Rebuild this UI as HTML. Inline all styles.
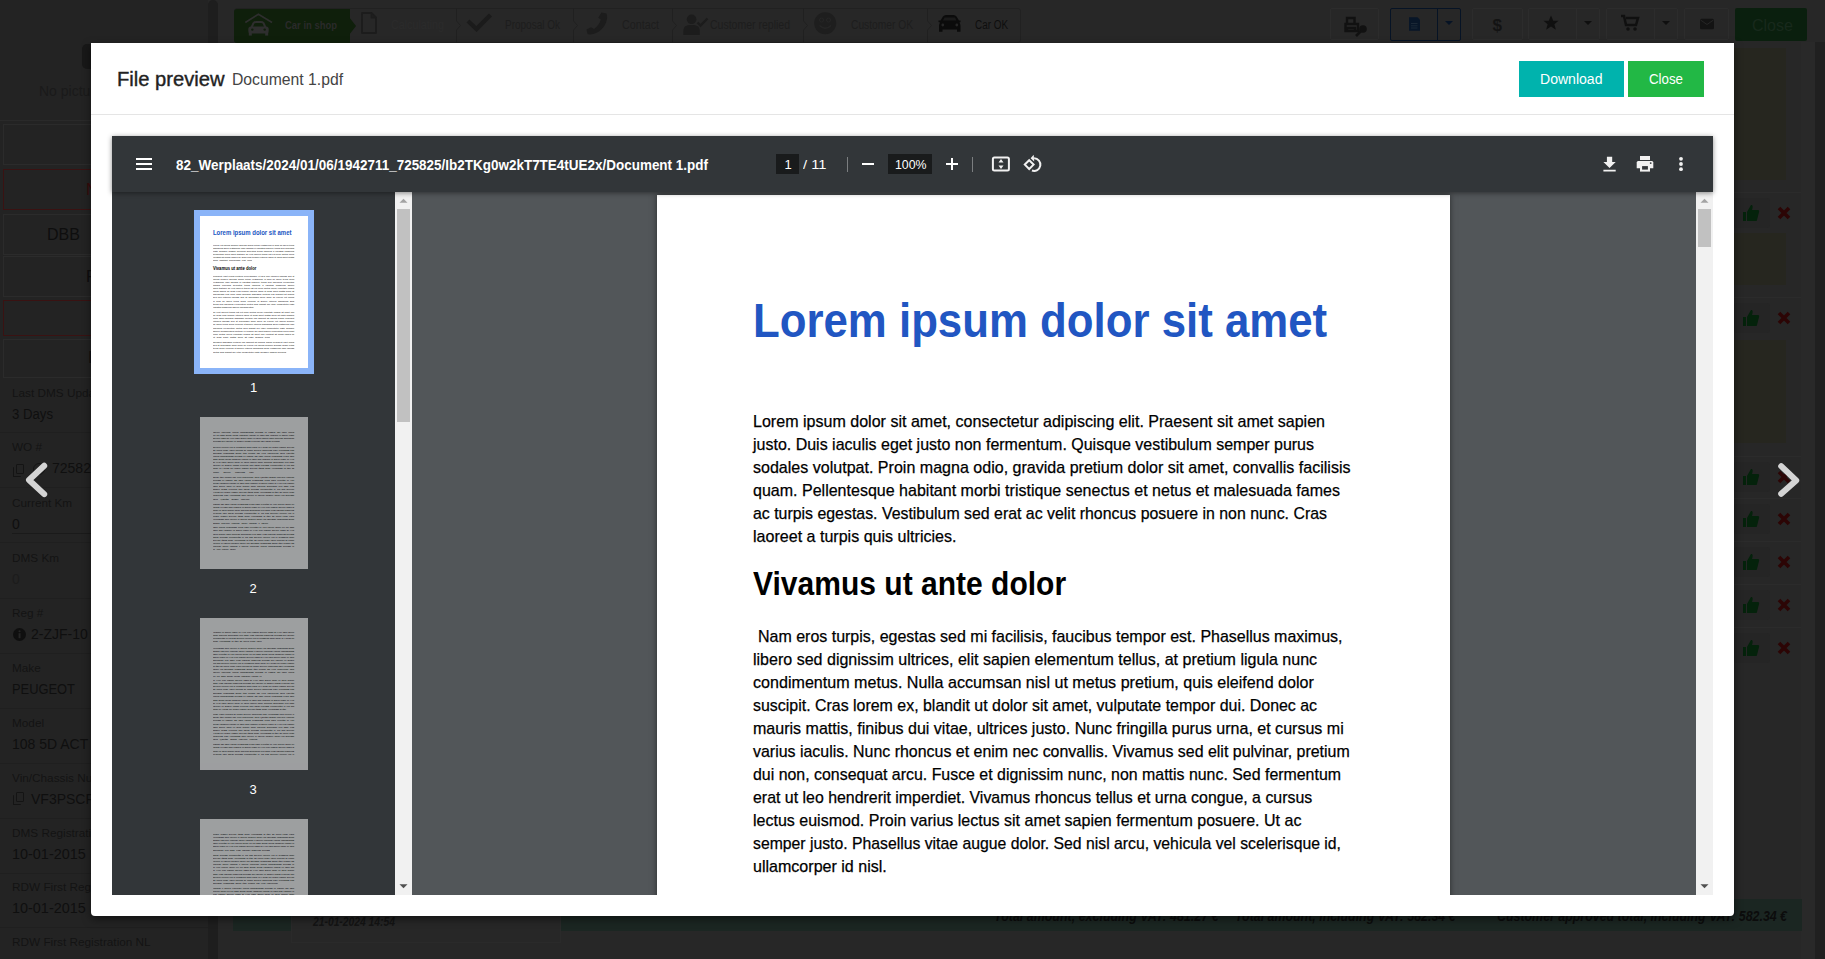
<!DOCTYPE html>
<html><head><meta charset="utf-8"><style>
*{box-sizing:border-box;margin:0;padding:0}
html,body{width:1825px;height:959px;overflow:hidden;background:#272727;font-family:"Liberation Sans",sans-serif;position:relative}
.a{position:absolute}
.t{position:absolute;white-space:pre;transform-origin:0 0;line-height:normal;font-family:"Liberation Sans",sans-serif}
svg{position:absolute;overflow:visible}
</style></head><body>
<div class="a" style="left:0;top:0;width:208px;height:959px;background:#232323"></div>
<div class="a" style="left:208px;top:0;width:10px;height:959px;background:#1e1e1e;border-radius:5px 5px 0 0"></div>
<div class="a" style="left:82px;top:44px;width:20px;height:25px;background:#181818;border-radius:5px"></div>
<div class="t" style="left:39px;top:83px;font-size:14px;font-weight:normal;font-style:normal;color:#1a1a1a;">No pictures</div>
<div class="a" style="left:0;top:120px;width:208px;height:1px;background:#2a2a2a"></div>
<div class="a" style="left:3px;top:124px;width:200px;height:41px;border:1px solid #2b2b2b"></div>
<div class="a" style="left:3px;top:169px;width:200px;height:41px;border:1px solid #3a1212"></div>
<div class="a" style="left:3px;top:214px;width:200px;height:41px;border:1px solid #2b2b2b"></div>
<div class="a" style="left:3px;top:256px;width:200px;height:41px;border:1px solid #2b2b2b"></div>
<div class="a" style="left:3px;top:300px;width:200px;height:36px;border:1px solid #3a1212"></div>
<div class="a" style="left:3px;top:339px;width:200px;height:39px;border:1px solid #2b2b2b"></div>
<div class="t" style="left:86px;top:181px;font-size:16px;font-weight:normal;font-style:normal;color:#3a0b0b;">NAP</div>
<div class="t" style="left:47px;top:226px;font-size:16px;font-weight:normal;font-style:normal;color:#0e0e0e;">DBB</div>
<div class="t" style="left:86px;top:268px;font-size:16px;font-weight:normal;font-style:normal;color:#0e0e0e;">FO</div>
<div class="t" style="left:88px;top:349px;font-size:16px;font-weight:normal;font-style:normal;color:#0e0e0e;">I</div>
<div class="t" style="left:12px;top:386.7px;font-size:11px;font-weight:normal;font-style:normal;color:#131313;transform:scaleX(1.0700);">Last DMS Update</div>
<div class="t" style="left:12px;top:405.6px;font-size:14px;font-weight:normal;font-style:normal;color:#0f0f0f;transform:scaleX(0.9400);">3 Days</div>
<div class="a" style="left:0;top:432px;width:208px;height:1px;background:#1f1f1f"></div>
<div class="t" style="left:12px;top:441.4px;font-size:11px;font-weight:normal;font-style:normal;color:#131313;transform:scaleX(1.0700);">WO #</div>
<div class="t" style="left:52px;top:460.3px;font-size:14px;font-weight:normal;font-style:normal;color:#0f0f0f;">725825</div>
<div class="a" style="left:0;top:487px;width:208px;height:1px;background:#1f1f1f"></div>
<div class="t" style="left:12px;top:496.5px;font-size:11px;font-weight:normal;font-style:normal;color:#131313;transform:scaleX(1.0700);">Current Km</div>
<div class="t" style="left:12px;top:515.5px;font-size:14px;font-weight:normal;font-style:normal;color:#0f0f0f;">0</div>
<div class="a" style="left:0;top:542px;width:208px;height:1px;background:#1f1f1f"></div>
<div class="t" style="left:12px;top:552px;font-size:11px;font-weight:normal;font-style:normal;color:#131313;transform:scaleX(1.0700);">DMS Km</div>
<div class="t" style="left:12px;top:571px;font-size:14px;font-weight:normal;font-style:normal;color:#1c1c1c;">0</div>
<div class="a" style="left:0;top:598px;width:208px;height:1px;background:#1f1f1f"></div>
<div class="t" style="left:12px;top:607px;font-size:11px;font-weight:normal;font-style:normal;color:#131313;transform:scaleX(1.0700);">Reg #</div>
<div class="t" style="left:31px;top:626px;font-size:14px;font-weight:normal;font-style:normal;color:#0f0f0f;">2-ZJF-10</div>
<div class="a" style="left:0;top:653px;width:208px;height:1px;background:#1f1f1f"></div>
<div class="t" style="left:12px;top:662px;font-size:11px;font-weight:normal;font-style:normal;color:#131313;transform:scaleX(1.0700);">Make</div>
<div class="t" style="left:12px;top:681px;font-size:14px;font-weight:normal;font-style:normal;color:#0f0f0f;transform:scaleX(0.9200);">PEUGEOT</div>
<div class="a" style="left:0;top:708px;width:208px;height:1px;background:#1f1f1f"></div>
<div class="t" style="left:12px;top:717px;font-size:11px;font-weight:normal;font-style:normal;color:#131313;transform:scaleX(1.0700);">Model</div>
<div class="t" style="left:12px;top:736px;font-size:14px;font-weight:normal;font-style:normal;color:#0f0f0f;">108 5D ACT</div>
<div class="a" style="left:0;top:763px;width:208px;height:1px;background:#1f1f1f"></div>
<div class="t" style="left:12px;top:772px;font-size:11px;font-weight:normal;font-style:normal;color:#131313;transform:scaleX(1.0700);">Vin/Chassis Number</div>
<div class="t" style="left:31px;top:791px;font-size:14px;font-weight:normal;font-style:normal;color:#0f0f0f;">VF3PSCF</div>
<div class="a" style="left:0;top:818px;width:208px;height:1px;background:#1f1f1f"></div>
<div class="t" style="left:12px;top:827px;font-size:11px;font-weight:normal;font-style:normal;color:#131313;transform:scaleX(1.0700);">DMS Registration</div>
<div class="t" style="left:12px;top:846px;font-size:14px;font-weight:normal;font-style:normal;color:#0f0f0f;transform:scaleX(1.0300);">10-01-2015</div>
<div class="a" style="left:0;top:873px;width:208px;height:1px;background:#1f1f1f"></div>
<div class="t" style="left:12px;top:881px;font-size:11px;font-weight:normal;font-style:normal;color:#131313;transform:scaleX(1.0700);">RDW First Registration</div>
<div class="t" style="left:12px;top:900px;font-size:14px;font-weight:normal;font-style:normal;color:#0f0f0f;transform:scaleX(1.0300);">10-01-2015</div>
<div class="a" style="left:0;top:927px;width:208px;height:1px;background:#1f1f1f"></div>
<div class="t" style="left:12px;top:936px;font-size:11px;font-weight:normal;font-style:normal;color:#131313;transform:scaleX(1.0700);">RDW First Registration NL</div>
<div class="a" style="left:0;top:982px;width:208px;height:1px;background:#1f1f1f"></div>
<div class="a" style="left:16px;top:464px;width:8px;height:10px;border:1.5px solid #141414;border-radius:1px"></div>
<div class="a" style="left:13px;top:467px;width:8px;height:10px;border:1.5px solid #141414;border-radius:1px;border-right:none;border-top:none"></div>
<div class="a" style="left:16px;top:792px;width:8px;height:10px;border:1.5px solid #141414;border-radius:1px"></div>
<div class="a" style="left:13px;top:795px;width:8px;height:10px;border:1.5px solid #141414;border-radius:1px;border-right:none;border-top:none"></div>
<div class="a" style="left:33px;top:463px;width:12px;height:12px;border:1.5px solid #141414;border-radius:50%"></div>
<svg style="left:12px;top:627px" width="15" height="15" viewBox="0 0 15 15"><circle cx="7.5" cy="7.5" r="6.5" fill="#0f0f0f"/><rect x="6.6" y="6.2" width="1.9" height="5" fill="#262626"/><circle cx="7.55" cy="4.2" r="1.05" fill="#262626"/></svg>
<div class="a" style="left:12px;top:533px;width:196px;height:1px;background:#1a1a1a"></div>
<div class="a" style="left:234px;top:8px;width:787px;height:35px;border:1px solid #212121;border-radius:3px"></div>
<div class="a" style="left:234px;top:9px;width:116px;height:34px;background:#0f1f0b;border-radius:3px 0 0 3px"></div>
<svg style="left:349px;top:17px" width="8" height="18" viewBox="0 0 8 18"><path d="M0 0 L7 9 L0 18Z" fill="#0f1f0b"/></svg>
<svg style="left:240px;top:10px" width="36" height="30" viewBox="240 10 36 30"><path d="M245.3 22.5 L258.4 14.2 L272.1 22.5" fill="none" stroke="#2e2e2e" stroke-width="1.6"/><path d="M251.5 27.5 L253.5 23 Q254.3 22 256 22 H261 Q262.7 22 263.5 23 L265.5 27.5" fill="none" stroke="#2e2e2e" stroke-width="2"/><rect x="248.3" y="26.5" width="20.4" height="7" rx="2.5" fill="#2e2e2e"/><circle cx="252.3" cy="29.6" r="1.2" fill="#0f1f0b"/><circle cx="264.7" cy="29.6" r="1.2" fill="#0f1f0b"/><rect x="248.8" y="32" width="3" height="3.6" fill="#2e2e2e"/><rect x="265.2" y="32" width="3" height="3.6" fill="#2e2e2e"/></svg>
<div class="t" style="left:284.5px;top:19.3px;font-size:11px;font-weight:bold;font-style:normal;color:#2a2a2a;transform:scaleX(0.8593);">Car in shop</div>
<div class="t" style="left:391px;top:18px;font-size:12px;font-weight:normal;font-style:normal;color:#2b2b2b;transform:scaleX(0.8926);">Calculating</div>
<div class="t" style="left:505px;top:18px;font-size:12px;font-weight:normal;font-style:normal;color:#1d1d1d;transform:scaleX(0.8329);">Proposal Ok</div>
<div class="t" style="left:622px;top:18px;font-size:12px;font-weight:normal;font-style:normal;color:#1d1d1d;transform:scaleX(0.8946);">Contact</div>
<div class="t" style="left:710px;top:18px;font-size:12px;font-weight:normal;font-style:normal;color:#1d1d1d;transform:scaleX(0.8755);">Customer replied</div>
<div class="t" style="left:851px;top:18px;font-size:12px;font-weight:normal;font-style:normal;color:#1d1d1d;transform:scaleX(0.8530);">Customer OK</div>
<div class="t" style="left:975px;top:18px;font-size:12px;font-weight:normal;font-style:normal;color:#0e0e0e;transform:scaleX(0.8247);">Car OK</div>
<svg style="left:455.6px;top:8px" width="10" height="35" viewBox="0 0 10 35"><path d="M0.5 0 V13 L4.5 17.5 L0.5 22 V35" fill="none" stroke="#202020" stroke-width="1"/></svg>
<svg style="left:573.2px;top:8px" width="10" height="35" viewBox="0 0 10 35"><path d="M0.5 0 V13 L4.5 17.5 L0.5 22 V35" fill="none" stroke="#202020" stroke-width="1"/></svg>
<svg style="left:671.9px;top:8px" width="10" height="35" viewBox="0 0 10 35"><path d="M0.5 0 V13 L4.5 17.5 L0.5 22 V35" fill="none" stroke="#202020" stroke-width="1"/></svg>
<svg style="left:802.6px;top:8px" width="10" height="35" viewBox="0 0 10 35"><path d="M0.5 0 V13 L4.5 17.5 L0.5 22 V35" fill="none" stroke="#202020" stroke-width="1"/></svg>
<svg style="left:926.6px;top:8px" width="10" height="35" viewBox="0 0 10 35"><path d="M0.5 0 V13 L4.5 17.5 L0.5 22 V35" fill="none" stroke="#202020" stroke-width="1"/></svg>
<svg style="left:358px;top:10px" width="22" height="28" viewBox="358 10 22 28"><path d="M362 13 H371.5 L376 17.5 V33 H362 Z M371.5 13 V17.5 H376" fill="none" stroke="#1c1c1c" stroke-width="1.8" stroke-linejoin="round"/></svg>
<svg style="left:460px;top:10px" width="36" height="26" viewBox="460 10 36 26"><path d="M469.5 22.5 L476.5 29 L489 16.5" fill="none" stroke="#1b1b1b" stroke-width="4.2" stroke-linecap="square"/></svg>
<svg style="left:580px;top:8px" width="32" height="30" viewBox="580 8 32 30"><path d="M601.5 12.6 L606.5 13.6 C608.5 19 605.5 27 599 31.5 C594 34.5 590 35 587.5 34 L586.5 29.5 L591 27.2 L594 29 C597.5 26.8 599.8 23 600.8 19.5 L598.2 17.8 Z" fill="#1c1c1c"/></svg>
<svg style="left:680px;top:10px" width="32" height="28" viewBox="680 10 32 28"><circle cx="691.6" cy="19.3" r="4.8" fill="#1c1c1c"/><path d="M683.4 35 V31 C683.4 26.5 686 25 691.6 25 C697 25 699.8 26.5 699.8 31 V35 Z" fill="#1c1c1c"/><path d="M697.5 22.5 L700.5 25.5 L707.5 18.5" fill="none" stroke="#1c1c1c" stroke-width="2.4"/></svg>
<svg style="left:812px;top:10px" width="28" height="28" viewBox="812 10 28 28"><circle cx="825.2" cy="23.3" r="11" fill="#1e1e1e"/><circle cx="821.5" cy="20" r="2" fill="none" stroke="#262626" stroke-width="1"/><circle cx="828.5" cy="20" r="2" fill="none" stroke="#262626" stroke-width="1"/><path d="M819.5 25.5 Q825.2 31 831 25.5" fill="none" stroke="#262626" stroke-width="1.4"/></svg>
<svg style="left:935px;top:12px" width="30" height="24" viewBox="935 12 30 24"><path d="M940.5 20.5 L943 16.5 Q944 15 946 15 H953.5 Q955.5 15 956.5 16.5 L959 20.5 H960.5 V22 L959.5 22.5 Q960.5 24 960.5 26 V31.8 H957 V29.5 H942.5 V31.8 H939 V26 Q939 24 940 22.5 L938.5 22 V20.5 Z" fill="#0b0b0b"/><path d="M943 20.5 L944.5 17.5 H955 L956.5 20.5Z" fill="#1a1a1a"/><circle cx="942.8" cy="25" r="1.4" fill="#262626"/><circle cx="956.8" cy="25" r="1.4" fill="#262626"/></svg>
<div class="a" style="left:1330px;top:8px;width:49px;height:32px;border:1px solid #2c2c2c;border-radius:2px"></div>
<div class="a" style="left:1472px;top:8px;width:51px;height:32px;border:1px solid #2c2c2c;border-radius:2px"></div>
<div class="a" style="left:1684px;top:8px;width:45px;height:32px;border:1px solid #2c2c2c;border-radius:2px"></div>
<div class="a" style="left:1528px;top:8px;width:72px;height:32px;border:1px solid #2c2c2c;border-radius:2px"></div>
<div class="a" style="left:1576px;top:8px;width:1px;height:32px;background:#2c2c2c"></div>
<svg style="left:1583px;top:20px" width="10" height="6" viewBox="0 0 10 6"><path d="M1 1h8l-4 4z" fill="#0f0f0f"/></svg>
<div class="a" style="left:1606px;top:8px;width:72px;height:32px;border:1px solid #2c2c2c;border-radius:2px"></div>
<div class="a" style="left:1654px;top:8px;width:1px;height:32px;background:#2c2c2c"></div>
<svg style="left:1661px;top:20px" width="10" height="6" viewBox="0 0 10 6"><path d="M1 1h8l-4 4z" fill="#0f0f0f"/></svg>
<div class="a" style="left:1390px;top:8px;width:71px;height:33px;border:1.5px solid #061325;border-radius:2px"></div>
<div class="a" style="left:1436.5px;top:8px;width:1.5px;height:33px;background:#061325"></div>
<svg style="left:1444px;top:20px" width="10" height="6" viewBox="0 0 10 6"><path d="M1 1h8l-4 4z" fill="#061325"/></svg>
<svg style="left:1405px;top:15px" width="16" height="18" viewBox="1405 15 16 18"><path d="M1409 17.2 H1417.5 L1420 19.7 V30.8 H1409 Z" fill="#081628"/><path d="M1411 23.5h6.5M1411 25.8h6.5M1411 28h6.5" stroke="#1e2a38" stroke-width="0.9"/></svg>
<svg style="left:1340px;top:12px" width="32" height="28" viewBox="1340 12 32 28"><path d="M1347 24 V18 H1354.5 V24 M1345.5 24 H1358 V31 H1345.5 Z M1347 31 V28 H1355 V31" fill="none" stroke="#111" stroke-width="2.4"/><circle cx="1363" cy="29" r="3.8" fill="#111"/><path d="M1361 31 L1356 36" stroke="#111" stroke-width="2.6"/></svg>
<div class="t" style="left:1492.5px;top:16px;font-size:17px;font-weight:bold;font-style:normal;color:#131313;">$</div>
<svg style="left:1542px;top:14px" width="18" height="18" viewBox="0 0 24 24"><path d="M12 2l3 7h7l-5.5 4.5 2 7.5L12 16.5 5.5 21l2-7.5L2 9h7z" fill="#101010"/></svg>
<svg style="left:1620px;top:14px" width="20" height="18" viewBox="0 0 20 18"><path d="M1 2h3l2 9h10l2-7H6" fill="none" stroke="#101010" stroke-width="2.5"/><circle cx="8" cy="15" r="1.8" fill="#101010"/><circle cx="15" cy="15" r="1.8" fill="#101010"/></svg>
<svg style="left:1698px;top:16px" width="18" height="16" viewBox="1698 16 18 16"><rect x="1700" y="18.7" width="14" height="10.5" rx="1.5" fill="#131313"/><path d="M1700.5 20 L1707 24.5 L1713.5 20" fill="none" stroke="#262626" stroke-width="1"/></svg>
<div class="a" style="left:1735px;top:8px;width:72px;height:33px;background:#0a1f0e;border-radius:2px"></div>
<div class="t" style="left:1752px;top:17px;font-size:16px;font-weight:normal;font-style:normal;color:#18291c;">Close</div>
<div class="a" style="left:1801px;top:42px;width:14px;height:917px;background:#292929"></div>
<div class="a" style="left:1815px;top:42px;width:10px;height:917px;background:#202020"></div>
<div class="a" style="left:1734px;top:48px;width:52px;height:132px;background:#26261f"></div>
<div class="a" style="left:1734px;top:233px;width:52px;height:52px;background:#26261f"></div>
<div class="a" style="left:1734px;top:340px;width:52px;height:103px;background:#26261f"></div>
<div class="a" style="left:1734px;top:198px;width:36px;height:30px;background:#252525;border-radius:3px"></div>
<svg style="left:1742px;top:204px" width="18" height="18" viewBox="0 0 18 18"><path d="M1 8h3v9H1z M5 8 L9 1 C11 1 11 3 10 6 H16 C17 6 17.5 7 17 8 L15 16 C15 17 14 17 13 17 H5z" fill="#04220b"/></svg>
<svg style="left:1777px;top:206px" width="14" height="14" viewBox="0 0 14 14"><path d="M2 2 L12 12 M12 2 L2 12" stroke="#2c0505" stroke-width="3.6"/></svg>
<div class="a" style="left:1734px;top:192px;width:67px;height:1px;background:#2b2b2b"></div>
<div class="a" style="left:1734px;top:303px;width:36px;height:30px;background:#252525;border-radius:3px"></div>
<svg style="left:1742px;top:309px" width="18" height="18" viewBox="0 0 18 18"><path d="M1 8h3v9H1z M5 8 L9 1 C11 1 11 3 10 6 H16 C17 6 17.5 7 17 8 L15 16 C15 17 14 17 13 17 H5z" fill="#04220b"/></svg>
<svg style="left:1777px;top:311px" width="14" height="14" viewBox="0 0 14 14"><path d="M2 2 L12 12 M12 2 L2 12" stroke="#2c0505" stroke-width="3.6"/></svg>
<div class="a" style="left:1734px;top:297px;width:67px;height:1px;background:#2b2b2b"></div>
<div class="a" style="left:1734px;top:462px;width:36px;height:30px;background:#252525;border-radius:3px"></div>
<svg style="left:1742px;top:468px" width="18" height="18" viewBox="0 0 18 18"><path d="M1 8h3v9H1z M5 8 L9 1 C11 1 11 3 10 6 H16 C17 6 17.5 7 17 8 L15 16 C15 17 14 17 13 17 H5z" fill="#04220b"/></svg>
<svg style="left:1777px;top:470px" width="14" height="14" viewBox="0 0 14 14"><path d="M2 2 L12 12 M12 2 L2 12" stroke="#2c0505" stroke-width="3.6"/></svg>
<div class="a" style="left:1734px;top:456px;width:67px;height:1px;background:#2b2b2b"></div>
<div class="a" style="left:1734px;top:504px;width:36px;height:30px;background:#252525;border-radius:3px"></div>
<svg style="left:1742px;top:510px" width="18" height="18" viewBox="0 0 18 18"><path d="M1 8h3v9H1z M5 8 L9 1 C11 1 11 3 10 6 H16 C17 6 17.5 7 17 8 L15 16 C15 17 14 17 13 17 H5z" fill="#04220b"/></svg>
<svg style="left:1777px;top:512px" width="14" height="14" viewBox="0 0 14 14"><path d="M2 2 L12 12 M12 2 L2 12" stroke="#2c0505" stroke-width="3.6"/></svg>
<div class="a" style="left:1734px;top:498px;width:67px;height:1px;background:#2b2b2b"></div>
<div class="a" style="left:1734px;top:547px;width:36px;height:30px;background:#252525;border-radius:3px"></div>
<svg style="left:1742px;top:553px" width="18" height="18" viewBox="0 0 18 18"><path d="M1 8h3v9H1z M5 8 L9 1 C11 1 11 3 10 6 H16 C17 6 17.5 7 17 8 L15 16 C15 17 14 17 13 17 H5z" fill="#04220b"/></svg>
<svg style="left:1777px;top:555px" width="14" height="14" viewBox="0 0 14 14"><path d="M2 2 L12 12 M12 2 L2 12" stroke="#2c0505" stroke-width="3.6"/></svg>
<div class="a" style="left:1734px;top:541px;width:67px;height:1px;background:#2b2b2b"></div>
<div class="a" style="left:1734px;top:589.5px;width:36px;height:30px;background:#252525;border-radius:3px"></div>
<svg style="left:1742px;top:595.5px" width="18" height="18" viewBox="0 0 18 18"><path d="M1 8h3v9H1z M5 8 L9 1 C11 1 11 3 10 6 H16 C17 6 17.5 7 17 8 L15 16 C15 17 14 17 13 17 H5z" fill="#04220b"/></svg>
<svg style="left:1777px;top:597.5px" width="14" height="14" viewBox="0 0 14 14"><path d="M2 2 L12 12 M12 2 L2 12" stroke="#2c0505" stroke-width="3.6"/></svg>
<div class="a" style="left:1734px;top:583.5px;width:67px;height:1px;background:#2b2b2b"></div>
<div class="a" style="left:1734px;top:632.5px;width:36px;height:30px;background:#252525;border-radius:3px"></div>
<svg style="left:1742px;top:638.5px" width="18" height="18" viewBox="0 0 18 18"><path d="M1 8h3v9H1z M5 8 L9 1 C11 1 11 3 10 6 H16 C17 6 17.5 7 17 8 L15 16 C15 17 14 17 13 17 H5z" fill="#04220b"/></svg>
<svg style="left:1777px;top:640.5px" width="14" height="14" viewBox="0 0 14 14"><path d="M2 2 L12 12 M12 2 L2 12" stroke="#2c0505" stroke-width="3.6"/></svg>
<div class="a" style="left:1734px;top:626.5px;width:67px;height:1px;background:#2b2b2b"></div>
<div class="a" style="left:233px;top:899px;width:58px;height:32px;background:#1b2622"></div>
<div class="a" style="left:291px;top:880px;width:270px;height:63px;border:1px solid #2a2a2a"></div>
<div class="t" style="left:313px;top:915px;font-size:12px;font-weight:bold;font-style:italic;color:#141414;transform:scaleX(0.8593);">21-01-2024 14:54</div>
<div class="a" style="left:561px;top:899px;width:1241px;height:32px;background:#1b2622"></div>
<div class="t" style="left:994px;top:907.5px;font-size:14px;font-weight:bold;font-style:italic;color:#0c0c0c;transform:scaleX(0.8898);">Total amount, excluding VAT: 481.27 €</div>
<div class="t" style="left:1234.5px;top:907.5px;font-size:14px;font-weight:bold;font-style:italic;color:#0c0c0c;transform:scaleX(0.8849);">Total amount, including VAT: 582.34 €</div>
<div class="t" style="left:1497px;top:907.5px;font-size:14px;font-weight:bold;font-style:italic;color:#0c0c0c;transform:scaleX(0.8855);">Customer approved total, including VAT: 582.34 €</div>
<div class="a" style="left:91px;top:42.5px;width:1643px;height:873.5px;background:#fff;border-radius:0 0 4px 4px;box-shadow:0 3px 9px rgba(0,0,0,.5)"></div>
<div class="a" style="left:91px;top:114px;width:1643px;height:1px;background:#e5e5e5"></div>
<div class="a" style="left:1519px;top:61px;width:105px;height:36px;background:#00b3ad"></div>
<div class="a" style="left:1628px;top:61px;width:76px;height:36px;background:#22b845"></div>
<div class="t" style="left:117px;top:66.6px;font-size:21px;font-weight:normal;font-style:normal;color:#222;transform:scaleX(0.9603);-webkit-text-stroke:0.4px #222">File preview</div>
<div class="t" style="left:231.5px;top:71.2px;font-size:16px;font-weight:normal;font-style:normal;color:#444;transform:scaleX(0.9836);">Document 1.pdf</div>
<div class="t" style="left:1540px;top:71px;font-size:14px;font-weight:normal;font-style:normal;color:#fff;transform:scaleX(1.0038);">Download</div>
<div class="t" style="left:1648.5px;top:71px;font-size:14px;font-weight:normal;font-style:normal;color:#fff;transform:scaleX(0.9498);">Close</div>
<div class="a" style="left:112px;top:136px;width:1601px;height:759px;background:#525659;overflow:hidden"></div>
<div class="a" style="left:0;top:0;width:1825px;height:895px;overflow:hidden">
<div class="a" style="left:112px;top:192px;width:283px;height:703px;background:#323639"></div>
<div class="a" style="left:395px;top:192px;width:17px;height:703px;background:#f1f1f1"></div>
<div class="a" style="left:397px;top:209px;width:13px;height:213px;background:#c1c1c1"></div>
<svg style="left:395px;top:192px" width="17" height="17" viewBox="0 0 17 17"><path d="M4.5 10.8h8l-4-4z" fill="#a3a3a3"/></svg><svg style="left:395px;top:878px" width="17" height="17" viewBox="0 0 17 17"><path d="M4.5 6.2h8l-4 4z" fill="#505050"/></svg>
<div class="a" style="left:657px;top:195px;width:793px;height:720px;background:#fff;box-shadow:0 0 6px rgba(0,0,0,.5)"></div>
<div class="a" style="left:1696px;top:192px;width:17px;height:703px;background:#f1f1f1"></div>
<div class="a" style="left:1698px;top:209px;width:13px;height:38px;background:#c1c1c1"></div>
<svg style="left:1696px;top:192px" width="17" height="17" viewBox="0 0 17 17"><path d="M4.5 10.8h8l-4-4z" fill="#a3a3a3"/></svg><svg style="left:1696px;top:878px" width="17" height="17" viewBox="0 0 17 17"><path d="M4.5 6.2h8l-4 4z" fill="#505050"/></svg>
<div class="a" style="left:194px;top:210px;width:120px;height:164px;background:#8ab4f8"></div>
<div class="a" style="left:200px;top:216px;width:108px;height:152px;overflow:hidden;opacity:1;background:#fff">
<div class="a" style="left:0;top:0;width:793px;height:1117px;transform:scale(0.13619);transform-origin:0 0">
<div class="a" style="left:95px;top:91.4px;font-size:50px;font-weight:bold;color:#2156c2;white-space:nowrap;transform:scaleX(.88);transform-origin:0 0">Lorem ipsum dolor sit amet</div><div class="a" style="left:95px;top:362.0px;font-size:34px;font-weight:bold;color:#000;white-space:nowrap;transform:scaleX(.9);transform-origin:0 0">Vivamus ut ante dolor</div>
<div class="a" style="left:95px;top:207.3px;width:599px;height:20px;overflow:hidden;font-family:Liberation Sans;font-weight:normal;font-size:17px;line-height:20px;text-align:justify;text-align-last:justify;color:#000;white-space:normal">Lorem elit iaculis semper gravida quam netus Vestibulum in quis mi libero tellus Nulla eleifend ut Donec ultrices</div>
<div class="a" style="left:95px;top:229.7px;width:599px;height:20px;overflow:hidden;font-family:Liberation Sans;font-weight:normal;font-size:17px;line-height:20px;text-align:justify;text-align-last:justify;color:#000;white-space:normal">adipiscing Duis vestibulum odio facilisis et egestas posuere turpis sed maximus elementum metus quis blandit dui vitae consectetur</div>
<div class="a" style="left:95px;top:252.0px;width:599px;height:20px;overflow:hidden;font-family:Liberation Sans;font-weight:normal;font-size:17px;line-height:20px;text-align:justify;text-align-last:justify;color:#000;white-space:normal">justo Quisque magna convallis senectus turpis rhoncus a egestas Phasellus sapien condimentum pretium ex tempor dui amet sapien</div>
<div class="a" style="left:95px;top:274.3px;width:599px;height:20px;overflow:hidden;font-family:Liberation Sans;font-weight:normal;font-size:17px;line-height:20px;text-align:justify;text-align-last:justify;color:#000;white-space:normal">fermentum Proin amet tristique ac velit laoreet turpis est elit nunc metus lorem vulputate finibus sit amet non</div>
<div class="a" style="left:95px;top:296.6px;width:599px;height:20px;overflow:hidden;font-family:Liberation Sans;font-weight:normal;font-size:17px;line-height:20px;text-align:justify;text-align-last:justify;color:#000;white-space:normal">volutpat sit morbi fames ac Cras eros tempor ultrices ligula ut Cras amet mattis dolor sit justo sodales</div>
<div class="a" style="left:95px;top:318.9px;width:288px;height:20px;overflow:hidden;font-family:Liberation Sans;font-weight:normal;font-size:17px;line-height:20px;text-align:justify;text-align-last:justify;color:#000;white-space:normal">dolor habitant malesuada erat nunc Nam faucibus dignissim pretium nisl suscipit sit mauris ipsum</div>
<div class="a" style="left:95px;top:429.8px;width:599px;height:20px;overflow:hidden;font-family:Liberation Sans;font-weight:normal;font-size:17px;line-height:20px;text-align:justify;text-align-last:justify;color:#000;white-space:normal">Praesent eget purus pretium Pellentesque et sed non ultricies facilisis sed at accumsan dolor dolor ac Lorem elit</div>
<div class="a" style="left:95px;top:452.1px;width:599px;height:20px;overflow:hidden;font-family:Liberation Sans;font-weight:normal;font-size:17px;line-height:20px;text-align:justify;text-align-last:justify;color:#000;white-space:normal">iaculis semper gravida quam netus Vestibulum in quis mi libero tellus Nulla eleifend ut Donec ultrices adipiscing Duis</div>
<div class="a" style="left:95px;top:474.5px;width:599px;height:20px;overflow:hidden;font-family:Liberation Sans;font-weight:normal;font-size:17px;line-height:20px;text-align:justify;text-align-last:justify;color:#000;white-space:normal">vestibulum odio facilisis et egestas posuere turpis sed maximus elementum metus quis blandit dui vitae consectetur justo Quisque</div>
<div class="a" style="left:95px;top:496.8px;width:599px;height:20px;overflow:hidden;font-family:Liberation Sans;font-weight:normal;font-size:17px;line-height:20px;text-align:justify;text-align-last:justify;color:#000;white-space:normal">magna convallis senectus turpis rhoncus a egestas Phasellus sapien condimentum pretium ex tempor dui amet sapien fermentum Proin</div>
<div class="a" style="left:95px;top:519.1px;width:599px;height:20px;overflow:hidden;font-family:Liberation Sans;font-weight:normal;font-size:17px;line-height:20px;text-align:justify;text-align-last:justify;color:#000;white-space:normal">amet tristique ac velit laoreet turpis est elit nunc metus lorem vulputate finibus sit amet non volutpat sit</div>
<div class="a" style="left:95px;top:541.4px;width:599px;height:20px;overflow:hidden;font-family:Liberation Sans;font-weight:normal;font-size:17px;line-height:20px;text-align:justify;text-align-last:justify;color:#000;white-space:normal">morbi fames ac Cras eros tempor ultrices ligula ut Cras amet mattis dolor sit justo sodales dolor habitant</div>
<div class="a" style="left:95px;top:563.8px;width:599px;height:20px;overflow:hidden;font-family:Liberation Sans;font-weight:normal;font-size:17px;line-height:20px;text-align:justify;text-align-last:justify;color:#000;white-space:normal">malesuada erat nunc Nam faucibus dignissim pretium nisl suscipit sit mauris ipsum Praesent eget purus pretium Pellentesque et</div>
<div class="a" style="left:95px;top:586.1px;width:599px;height:20px;overflow:hidden;font-family:Liberation Sans;font-weight:normal;font-size:17px;line-height:20px;text-align:justify;text-align-last:justify;color:#000;white-space:normal">sed non ultricies facilisis sed at accumsan dolor dolor ac Lorem elit iaculis semper gravida quam netus Vestibulum</div>
<div class="a" style="left:95px;top:614.9px;width:599px;height:20px;overflow:hidden;font-family:Liberation Sans;font-weight:normal;font-size:17px;line-height:20px;text-align:justify;text-align-last:justify;color:#000;white-space:normal">in quis mi libero tellus Nulla eleifend ut Donec ultrices adipiscing Duis vestibulum odio facilisis et egestas posuere</div>
<div class="a" style="left:95px;top:637.2px;width:599px;height:20px;overflow:hidden;font-family:Liberation Sans;font-weight:normal;font-size:17px;line-height:20px;text-align:justify;text-align-last:justify;color:#000;white-space:normal">turpis sed maximus elementum metus quis blandit dui vitae consectetur justo Quisque magna convallis senectus turpis rhoncus a</div>
<div class="a" style="left:95px;top:659.5px;width:300px;height:20px;overflow:hidden;font-family:Liberation Sans;font-weight:normal;font-size:17px;line-height:20px;text-align:justify;text-align-last:justify;color:#000;white-space:normal">egestas Phasellus sapien condimentum pretium ex tempor dui amet sapien fermentum Proin amet tristique</div>
<div class="a" style="left:95px;top:695.6px;width:599px;height:20px;overflow:hidden;font-family:Liberation Sans;font-weight:normal;font-size:17px;line-height:20px;text-align:justify;text-align-last:justify;color:#000;white-space:normal">ac velit laoreet turpis est elit nunc metus lorem vulputate finibus sit amet non volutpat sit morbi fames</div>
<div class="a" style="left:95px;top:717.9px;width:599px;height:20px;overflow:hidden;font-family:Liberation Sans;font-weight:normal;font-size:17px;line-height:20px;text-align:justify;text-align-last:justify;color:#000;white-space:normal">ac Cras eros tempor ultrices ligula ut Cras amet mattis dolor sit justo sodales dolor habitant malesuada erat</div>
<div class="a" style="left:95px;top:740.3px;width:599px;height:20px;overflow:hidden;font-family:Liberation Sans;font-weight:normal;font-size:17px;line-height:20px;text-align:justify;text-align-last:justify;color:#000;white-space:normal">nunc Nam faucibus dignissim pretium nisl suscipit sit mauris ipsum Praesent eget purus pretium Pellentesque et sed non</div>
<div class="a" style="left:95px;top:762.6px;width:599px;height:20px;overflow:hidden;font-family:Liberation Sans;font-weight:normal;font-size:17px;line-height:20px;text-align:justify;text-align-last:justify;color:#000;white-space:normal">ultricies facilisis sed at accumsan dolor dolor ac Lorem elit iaculis semper gravida quam netus Vestibulum in quis</div>
<div class="a" style="left:95px;top:784.9px;width:599px;height:20px;overflow:hidden;font-family:Liberation Sans;font-weight:normal;font-size:17px;line-height:20px;text-align:justify;text-align-last:justify;color:#000;white-space:normal">mi libero tellus Nulla eleifend ut Donec ultrices adipiscing Duis vestibulum odio facilisis et egestas posuere turpis sed</div>
<div class="a" style="left:95px;top:814.6px;width:599px;height:20px;overflow:hidden;font-family:Liberation Sans;font-weight:normal;font-size:17px;line-height:20px;text-align:justify;text-align-last:justify;color:#000;white-space:normal">maximus elementum metus quis blandit dui vitae consectetur justo Quisque magna convallis senectus turpis rhoncus a egestas Phasellus</div>
<div class="a" style="left:95px;top:836.9px;width:599px;height:20px;overflow:hidden;font-family:Liberation Sans;font-weight:normal;font-size:17px;line-height:20px;text-align:justify;text-align-last:justify;color:#000;white-space:normal">sapien condimentum pretium ex tempor dui amet sapien fermentum Proin amet tristique ac velit laoreet turpis est elit</div>
<div class="a" style="left:95px;top:859.2px;width:599px;height:20px;overflow:hidden;font-family:Liberation Sans;font-weight:normal;font-size:17px;line-height:20px;text-align:justify;text-align-last:justify;color:#000;white-space:normal">nunc metus lorem vulputate finibus sit amet non volutpat sit morbi fames ac Cras eros tempor ultrices ligula</div>
<div class="a" style="left:95px;top:881.5px;width:419px;height:20px;overflow:hidden;font-family:Liberation Sans;font-weight:normal;font-size:17px;line-height:20px;text-align:justify;text-align-last:justify;color:#000;white-space:normal">ut Cras amet mattis dolor sit justo sodales dolor habitant malesuada erat nunc Nam</div>
<div class="a" style="left:95px;top:916.6px;width:599px;height:20px;overflow:hidden;font-family:Liberation Sans;font-weight:normal;font-size:17px;line-height:20px;text-align:justify;text-align-last:justify;color:#000;white-space:normal">faucibus dignissim pretium nisl suscipit sit mauris ipsum Praesent eget purus pretium Pellentesque et sed non ultricies facilisis</div>
<div class="a" style="left:95px;top:939.0px;width:599px;height:20px;overflow:hidden;font-family:Liberation Sans;font-weight:normal;font-size:17px;line-height:20px;text-align:justify;text-align-last:justify;color:#000;white-space:normal">sed at accumsan dolor dolor ac Lorem elit iaculis semper gravida quam netus Vestibulum in quis mi libero</div>
<div class="a" style="left:95px;top:961.3px;width:599px;height:20px;overflow:hidden;font-family:Liberation Sans;font-weight:normal;font-size:17px;line-height:20px;text-align:justify;text-align-last:justify;color:#000;white-space:normal">tellus Nulla eleifend ut Donec ultrices adipiscing Duis vestibulum odio facilisis et egestas posuere turpis sed maximus elementum</div>
<div class="a" style="left:95px;top:990.1px;width:539px;height:20px;overflow:hidden;font-family:Liberation Sans;font-weight:normal;font-size:17px;line-height:20px;text-align:justify;text-align-last:justify;color:#000;white-space:normal">metus quis blandit dui vitae consectetur justo Quisque magna convallis senectus turpis rhoncus a</div>
</div></div>
<div class="a" style="left:200px;top:417px;width:108px;height:152px;overflow:hidden;opacity:0.52;background:#fff">
<div class="a" style="left:0;top:0;width:793px;height:1117px;transform:scale(0.13619);transform-origin:0 0">

<div class="a" style="left:95px;top:99.4px;width:599px;height:20px;overflow:hidden;font-family:Liberation Serif;font-weight:bold;font-size:17px;line-height:20px;text-align:justify;text-align-last:justify;color:#000;white-space:normal">egestas Phasellus sapien condimentum pretium ex tempor dui amet sapien fermentum Proin amet tristique ac velit laoreet turpis</div>
<div class="a" style="left:95px;top:121.7px;width:599px;height:20px;overflow:hidden;font-family:Liberation Serif;font-weight:bold;font-size:17px;line-height:20px;text-align:justify;text-align-last:justify;color:#000;white-space:normal">est elit nunc metus lorem vulputate finibus sit amet non volutpat sit morbi fames ac Cras eros tempor</div>
<div class="a" style="left:95px;top:144.0px;width:599px;height:20px;overflow:hidden;font-family:Liberation Serif;font-weight:bold;font-size:17px;line-height:20px;text-align:justify;text-align-last:justify;color:#000;white-space:normal">ultrices ligula ut Cras amet mattis dolor sit justo sodales dolor habitant malesuada erat nunc Nam faucibus dignissim</div>
<div class="a" style="left:95px;top:166.4px;width:491px;height:20px;overflow:hidden;font-family:Liberation Serif;font-weight:bold;font-size:17px;line-height:20px;text-align:justify;text-align-last:justify;color:#000;white-space:normal">pretium nisl suscipit sit mauris ipsum Praesent eget purus pretium Pellentesque et sed non</div>
<div class="a" style="left:95px;top:208.8px;width:599px;height:20px;overflow:hidden;font-family:Liberation Serif;font-weight:bold;font-size:17px;line-height:20px;text-align:justify;text-align-last:justify;color:#000;white-space:normal">ultricies facilisis sed at accumsan dolor dolor ac Lorem elit iaculis semper gravida quam netus Vestibulum in quis</div>
<div class="a" style="left:95px;top:231.1px;width:599px;height:20px;overflow:hidden;font-family:Liberation Serif;font-weight:bold;font-size:17px;line-height:20px;text-align:justify;text-align-last:justify;color:#000;white-space:normal">mi libero tellus Nulla eleifend ut Donec ultrices adipiscing Duis vestibulum odio facilisis et egestas posuere turpis sed</div>
<div class="a" style="left:95px;top:253.5px;width:599px;height:20px;overflow:hidden;font-family:Liberation Serif;font-weight:bold;font-size:17px;line-height:20px;text-align:justify;text-align-last:justify;color:#000;white-space:normal">maximus elementum metus quis blandit dui vitae consectetur justo Quisque magna convallis senectus turpis rhoncus a egestas Phasellus</div>
<div class="a" style="left:95px;top:275.8px;width:599px;height:20px;overflow:hidden;font-family:Liberation Serif;font-weight:bold;font-size:17px;line-height:20px;text-align:justify;text-align-last:justify;color:#000;white-space:normal">sapien condimentum pretium ex tempor dui amet sapien fermentum Proin amet tristique ac velit laoreet turpis est elit</div>
<div class="a" style="left:95px;top:298.1px;width:599px;height:20px;overflow:hidden;font-family:Liberation Serif;font-weight:bold;font-size:17px;line-height:20px;text-align:justify;text-align-last:justify;color:#000;white-space:normal">nunc metus lorem vulputate finibus sit amet non volutpat sit morbi fames ac Cras eros tempor ultrices ligula</div>
<div class="a" style="left:95px;top:320.4px;width:599px;height:20px;overflow:hidden;font-family:Liberation Serif;font-weight:bold;font-size:17px;line-height:20px;text-align:justify;text-align-last:justify;color:#000;white-space:normal">ut Cras amet mattis dolor sit justo sodales dolor habitant malesuada erat nunc Nam faucibus dignissim pretium nisl</div>
<div class="a" style="left:95px;top:342.7px;width:599px;height:20px;overflow:hidden;font-family:Liberation Serif;font-weight:bold;font-size:17px;line-height:20px;text-align:justify;text-align-last:justify;color:#000;white-space:normal">suscipit sit mauris ipsum Praesent eget purus pretium Pellentesque et sed non ultricies facilisis sed at accumsan dolor</div>
<div class="a" style="left:95px;top:365.1px;width:599px;height:20px;overflow:hidden;font-family:Liberation Serif;font-weight:bold;font-size:17px;line-height:20px;text-align:justify;text-align-last:justify;color:#000;white-space:normal">dolor ac Lorem elit iaculis semper gravida quam netus Vestibulum in quis mi libero tellus Nulla eleifend ut</div>
<div class="a" style="left:95px;top:393.1px;width:300px;height:20px;overflow:hidden;font-family:Liberation Serif;font-weight:bold;font-size:17px;line-height:20px;text-align:justify;text-align-last:justify;color:#000;white-space:normal">Donec ultrices adipiscing Duis vestibulum odio facilisis et egestas posuere turpis sed maximus elementum</div>
<div class="a" style="left:95px;top:430.6px;width:599px;height:20px;overflow:hidden;font-family:Liberation Serif;font-weight:bold;font-size:17px;line-height:20px;text-align:justify;text-align-last:justify;color:#000;white-space:normal">metus quis blandit dui vitae consectetur justo Quisque magna convallis senectus turpis rhoncus a egestas Phasellus sapien condimentum</div>
<div class="a" style="left:95px;top:452.9px;width:599px;height:20px;overflow:hidden;font-family:Liberation Serif;font-weight:bold;font-size:17px;line-height:20px;text-align:justify;text-align-last:justify;color:#000;white-space:normal">pretium ex tempor dui amet sapien fermentum Proin amet tristique ac velit laoreet turpis est elit nunc metus</div>
<div class="a" style="left:95px;top:475.2px;width:599px;height:20px;overflow:hidden;font-family:Liberation Serif;font-weight:bold;font-size:17px;line-height:20px;text-align:justify;text-align-last:justify;color:#000;white-space:normal">lorem vulputate finibus sit amet non volutpat sit morbi fames ac Cras eros tempor ultrices ligula ut Cras</div>
<div class="a" style="left:95px;top:497.5px;width:599px;height:20px;overflow:hidden;font-family:Liberation Serif;font-weight:bold;font-size:17px;line-height:20px;text-align:justify;text-align-last:justify;color:#000;white-space:normal">amet mattis dolor sit justo sodales dolor habitant malesuada erat nunc Nam faucibus dignissim pretium nisl suscipit sit</div>
<div class="a" style="left:95px;top:519.8px;width:599px;height:20px;overflow:hidden;font-family:Liberation Serif;font-weight:bold;font-size:17px;line-height:20px;text-align:justify;text-align-last:justify;color:#000;white-space:normal">mauris ipsum Praesent eget purus pretium Pellentesque et sed non ultricies facilisis sed at accumsan dolor dolor ac</div>
<div class="a" style="left:95px;top:542.2px;width:599px;height:20px;overflow:hidden;font-family:Liberation Serif;font-weight:bold;font-size:17px;line-height:20px;text-align:justify;text-align-last:justify;color:#000;white-space:normal">Lorem elit iaculis semper gravida quam netus Vestibulum in quis mi libero tellus Nulla eleifend ut Donec ultrices</div>
<div class="a" style="left:95px;top:564.5px;width:599px;height:20px;overflow:hidden;font-family:Liberation Serif;font-weight:bold;font-size:17px;line-height:20px;text-align:justify;text-align-last:justify;color:#000;white-space:normal">adipiscing Duis vestibulum odio facilisis et egestas posuere turpis sed maximus elementum metus quis blandit dui vitae consectetur</div>
<div class="a" style="left:95px;top:592.1px;width:270px;height:20px;overflow:hidden;font-family:Liberation Serif;font-weight:bold;font-size:17px;line-height:20px;text-align:justify;text-align-last:justify;color:#000;white-space:normal">justo Quisque magna convallis senectus turpis rhoncus a egestas Phasellus sapien condimentum pretium ex</div>
<div class="a" style="left:95px;top:629.5px;width:599px;height:20px;overflow:hidden;font-family:Liberation Serif;font-weight:bold;font-size:17px;line-height:20px;text-align:justify;text-align-last:justify;color:#000;white-space:normal">tempor dui amet sapien fermentum Proin amet tristique ac velit laoreet turpis est elit nunc metus lorem vulputate</div>
<div class="a" style="left:95px;top:651.9px;width:599px;height:20px;overflow:hidden;font-family:Liberation Serif;font-weight:bold;font-size:17px;line-height:20px;text-align:justify;text-align-last:justify;color:#000;white-space:normal">finibus sit amet non volutpat sit morbi fames ac Cras eros tempor ultrices ligula ut Cras amet mattis</div>
<div class="a" style="left:95px;top:674.2px;width:599px;height:20px;overflow:hidden;font-family:Liberation Serif;font-weight:bold;font-size:17px;line-height:20px;text-align:justify;text-align-last:justify;color:#000;white-space:normal">dolor sit justo sodales dolor habitant malesuada erat nunc Nam faucibus dignissim pretium nisl suscipit sit mauris ipsum</div>
<div class="a" style="left:95px;top:696.5px;width:599px;height:20px;overflow:hidden;font-family:Liberation Serif;font-weight:bold;font-size:17px;line-height:20px;text-align:justify;text-align-last:justify;color:#000;white-space:normal">Praesent eget purus pretium Pellentesque et sed non ultricies facilisis sed at accumsan dolor dolor ac Lorem elit</div>
<div class="a" style="left:95px;top:718.8px;width:599px;height:20px;overflow:hidden;font-family:Liberation Serif;font-weight:bold;font-size:17px;line-height:20px;text-align:justify;text-align-last:justify;color:#000;white-space:normal">iaculis semper gravida quam netus Vestibulum in quis mi libero tellus Nulla eleifend ut Donec ultrices adipiscing Duis</div>
<div class="a" style="left:95px;top:741.1px;width:599px;height:20px;overflow:hidden;font-family:Liberation Serif;font-weight:bold;font-size:17px;line-height:20px;text-align:justify;text-align-last:justify;color:#000;white-space:normal">vestibulum odio facilisis et egestas posuere turpis sed maximus elementum metus quis blandit dui vitae consectetur justo Quisque</div>
<div class="a" style="left:95px;top:768.3px;width:407px;height:20px;overflow:hidden;font-family:Liberation Serif;font-weight:bold;font-size:17px;line-height:20px;text-align:justify;text-align-last:justify;color:#000;white-space:normal">magna convallis senectus turpis rhoncus a egestas Phasellus sapien condimentum pretium ex tempor dui</div>
<div class="a" style="left:95px;top:802.8px;width:599px;height:20px;overflow:hidden;font-family:Liberation Serif;font-weight:bold;font-size:17px;line-height:20px;text-align:justify;text-align-last:justify;color:#000;white-space:normal">amet sapien fermentum Proin amet tristique ac velit laoreet turpis est elit nunc metus lorem vulputate finibus sit</div>
<div class="a" style="left:95px;top:825.1px;width:599px;height:20px;overflow:hidden;font-family:Liberation Serif;font-weight:bold;font-size:17px;line-height:20px;text-align:justify;text-align-last:justify;color:#000;white-space:normal">amet non volutpat sit morbi fames ac Cras eros tempor ultrices ligula ut Cras amet mattis dolor sit</div>
<div class="a" style="left:95px;top:847.5px;width:599px;height:20px;overflow:hidden;font-family:Liberation Serif;font-weight:bold;font-size:17px;line-height:20px;text-align:justify;text-align-last:justify;color:#000;white-space:normal">justo sodales dolor habitant malesuada erat nunc Nam faucibus dignissim pretium nisl suscipit sit mauris ipsum Praesent eget</div>
<div class="a" style="left:95px;top:869.8px;width:599px;height:20px;overflow:hidden;font-family:Liberation Serif;font-weight:bold;font-size:17px;line-height:20px;text-align:justify;text-align-last:justify;color:#000;white-space:normal">purus pretium Pellentesque et sed non ultricies facilisis sed at accumsan dolor dolor ac Lorem elit iaculis semper</div>
<div class="a" style="left:95px;top:892.1px;width:599px;height:20px;overflow:hidden;font-family:Liberation Serif;font-weight:bold;font-size:17px;line-height:20px;text-align:justify;text-align-last:justify;color:#000;white-space:normal">gravida quam netus Vestibulum in quis mi libero tellus Nulla eleifend ut Donec ultrices adipiscing Duis vestibulum odio</div>
<div class="a" style="left:95px;top:914.4px;width:599px;height:20px;overflow:hidden;font-family:Liberation Serif;font-weight:bold;font-size:17px;line-height:20px;text-align:justify;text-align-last:justify;color:#000;white-space:normal">facilisis et egestas posuere turpis sed maximus elementum metus quis blandit dui vitae consectetur justo Quisque magna convallis</div>
<div class="a" style="left:95px;top:936.8px;width:599px;height:20px;overflow:hidden;font-family:Liberation Serif;font-weight:bold;font-size:17px;line-height:20px;text-align:justify;text-align-last:justify;color:#000;white-space:normal">senectus turpis rhoncus a egestas Phasellus sapien condimentum pretium ex tempor dui amet sapien fermentum Proin amet tristique</div>
<div class="a" style="left:95px;top:965.1px;width:168px;height:20px;overflow:hidden;font-family:Liberation Serif;font-weight:bold;font-size:17px;line-height:20px;text-align:justify;text-align-last:justify;color:#000;white-space:normal">ac velit laoreet turpis est elit nunc metus lorem vulputate finibus sit amet non</div>
</div></div>
<div class="a" style="left:200px;top:618px;width:108px;height:152px;overflow:hidden;opacity:0.52;background:#fff">
<div class="a" style="left:0;top:0;width:793px;height:1117px;transform:scale(0.13619);transform-origin:0 0">

<div class="a" style="left:95px;top:96.5px;width:599px;height:20px;overflow:hidden;font-family:Liberation Serif;font-weight:bold;font-size:17px;line-height:20px;text-align:justify;text-align-last:justify;color:#000;white-space:normal">volutpat sit morbi fames ac Cras eros tempor ultrices ligula ut Cras amet mattis dolor sit justo sodales</div>
<div class="a" style="left:95px;top:118.8px;width:599px;height:20px;overflow:hidden;font-family:Liberation Serif;font-weight:bold;font-size:17px;line-height:20px;text-align:justify;text-align-last:justify;color:#000;white-space:normal">dolor habitant malesuada erat nunc Nam faucibus dignissim pretium nisl suscipit sit mauris ipsum Praesent eget purus pretium</div>
<div class="a" style="left:95px;top:141.1px;width:599px;height:20px;overflow:hidden;font-family:Liberation Serif;font-weight:bold;font-size:17px;line-height:20px;text-align:justify;text-align-last:justify;color:#000;white-space:normal">Pellentesque et sed non ultricies facilisis sed at accumsan dolor dolor ac Lorem elit iaculis semper gravida quam</div>
<div class="a" style="left:95px;top:163.4px;width:359px;height:20px;overflow:hidden;font-family:Liberation Serif;font-weight:bold;font-size:17px;line-height:20px;text-align:justify;text-align-last:justify;color:#000;white-space:normal">netus Vestibulum in quis mi libero tellus Nulla eleifend ut Donec ultrices adipiscing Duis</div>
<div class="a" style="left:95px;top:209.5px;width:599px;height:20px;overflow:hidden;font-family:Liberation Serif;font-weight:bold;font-size:17px;line-height:20px;text-align:justify;text-align-last:justify;color:#000;white-space:normal">vestibulum odio facilisis et egestas posuere turpis sed maximus elementum metus quis blandit dui vitae consectetur justo Quisque</div>
<div class="a" style="left:95px;top:231.9px;width:599px;height:20px;overflow:hidden;font-family:Liberation Serif;font-weight:bold;font-size:17px;line-height:20px;text-align:justify;text-align-last:justify;color:#000;white-space:normal">magna convallis senectus turpis rhoncus a egestas Phasellus sapien condimentum pretium ex tempor dui amet sapien fermentum Proin</div>
<div class="a" style="left:95px;top:254.2px;width:599px;height:20px;overflow:hidden;font-family:Liberation Serif;font-weight:bold;font-size:17px;line-height:20px;text-align:justify;text-align-last:justify;color:#000;white-space:normal">amet tristique ac velit laoreet turpis est elit nunc metus lorem vulputate finibus sit amet non volutpat sit</div>
<div class="a" style="left:95px;top:276.5px;width:599px;height:20px;overflow:hidden;font-family:Liberation Serif;font-weight:bold;font-size:17px;line-height:20px;text-align:justify;text-align-last:justify;color:#000;white-space:normal">morbi fames ac Cras eros tempor ultrices ligula ut Cras amet mattis dolor sit justo sodales dolor habitant</div>
<div class="a" style="left:95px;top:298.8px;width:599px;height:20px;overflow:hidden;font-family:Liberation Serif;font-weight:bold;font-size:17px;line-height:20px;text-align:justify;text-align-last:justify;color:#000;white-space:normal">malesuada erat nunc Nam faucibus dignissim pretium nisl suscipit sit mauris ipsum Praesent eget purus pretium Pellentesque et</div>
<div class="a" style="left:95px;top:321.2px;width:599px;height:20px;overflow:hidden;font-family:Liberation Serif;font-weight:bold;font-size:17px;line-height:20px;text-align:justify;text-align-last:justify;color:#000;white-space:normal">sed non ultricies facilisis sed at accumsan dolor dolor ac Lorem elit iaculis semper gravida quam netus Vestibulum</div>
<div class="a" style="left:95px;top:343.5px;width:599px;height:20px;overflow:hidden;font-family:Liberation Serif;font-weight:bold;font-size:17px;line-height:20px;text-align:justify;text-align-last:justify;color:#000;white-space:normal">in quis mi libero tellus Nulla eleifend ut Donec ultrices adipiscing Duis vestibulum odio facilisis et egestas posuere</div>
<div class="a" style="left:95px;top:365.8px;width:599px;height:20px;overflow:hidden;font-family:Liberation Serif;font-weight:bold;font-size:17px;line-height:20px;text-align:justify;text-align-last:justify;color:#000;white-space:normal">turpis sed maximus elementum metus quis blandit dui vitae consectetur justo Quisque magna convallis senectus turpis rhoncus a</div>
<div class="a" style="left:95px;top:392.4px;width:599px;height:20px;overflow:hidden;font-family:Liberation Serif;font-weight:bold;font-size:17px;line-height:20px;text-align:justify;text-align-last:justify;color:#000;white-space:normal">egestas Phasellus sapien condimentum pretium ex tempor dui amet sapien fermentum Proin amet tristique ac velit laoreet turpis</div>
<div class="a" style="left:95px;top:414.7px;width:359px;height:20px;overflow:hidden;font-family:Liberation Serif;font-weight:bold;font-size:17px;line-height:20px;text-align:justify;text-align-last:justify;color:#000;white-space:normal">est elit nunc metus lorem vulputate finibus sit amet non volutpat sit morbi fames</div>
<div class="a" style="left:95px;top:450.4px;width:599px;height:20px;overflow:hidden;font-family:Liberation Serif;font-weight:bold;font-size:17px;line-height:20px;text-align:justify;text-align-last:justify;color:#000;white-space:normal">ac Cras eros tempor ultrices ligula ut Cras amet mattis dolor sit justo sodales dolor habitant malesuada erat</div>
<div class="a" style="left:95px;top:472.7px;width:599px;height:20px;overflow:hidden;font-family:Liberation Serif;font-weight:bold;font-size:17px;line-height:20px;text-align:justify;text-align-last:justify;color:#000;white-space:normal">nunc Nam faucibus dignissim pretium nisl suscipit sit mauris ipsum Praesent eget purus pretium Pellentesque et sed non</div>
<div class="a" style="left:95px;top:495.0px;width:599px;height:20px;overflow:hidden;font-family:Liberation Serif;font-weight:bold;font-size:17px;line-height:20px;text-align:justify;text-align-last:justify;color:#000;white-space:normal">ultricies facilisis sed at accumsan dolor dolor ac Lorem elit iaculis semper gravida quam netus Vestibulum in quis</div>
<div class="a" style="left:95px;top:517.3px;width:599px;height:20px;overflow:hidden;font-family:Liberation Serif;font-weight:bold;font-size:17px;line-height:20px;text-align:justify;text-align-last:justify;color:#000;white-space:normal">mi libero tellus Nulla eleifend ut Donec ultrices adipiscing Duis vestibulum odio facilisis et egestas posuere turpis sed</div>
<div class="a" style="left:95px;top:539.7px;width:599px;height:20px;overflow:hidden;font-family:Liberation Serif;font-weight:bold;font-size:17px;line-height:20px;text-align:justify;text-align-last:justify;color:#000;white-space:normal">maximus elementum metus quis blandit dui vitae consectetur justo Quisque magna convallis senectus turpis rhoncus a egestas Phasellus</div>
<div class="a" style="left:95px;top:562.0px;width:599px;height:20px;overflow:hidden;font-family:Liberation Serif;font-weight:bold;font-size:17px;line-height:20px;text-align:justify;text-align-last:justify;color:#000;white-space:normal">sapien condimentum pretium ex tempor dui amet sapien fermentum Proin amet tristique ac velit laoreet turpis est elit</div>
<div class="a" style="left:95px;top:590.6px;width:599px;height:20px;overflow:hidden;font-family:Liberation Serif;font-weight:bold;font-size:17px;line-height:20px;text-align:justify;text-align-last:justify;color:#000;white-space:normal">nunc metus lorem vulputate finibus sit amet non volutpat sit morbi fames ac Cras eros tempor ultrices ligula</div>
<div class="a" style="left:95px;top:612.9px;width:599px;height:20px;overflow:hidden;font-family:Liberation Serif;font-weight:bold;font-size:17px;line-height:20px;text-align:justify;text-align-last:justify;color:#000;white-space:normal">ut Cras amet mattis dolor sit justo sodales dolor habitant malesuada erat nunc Nam faucibus dignissim pretium nisl</div>
<div class="a" style="left:95px;top:635.3px;width:599px;height:20px;overflow:hidden;font-family:Liberation Serif;font-weight:bold;font-size:17px;line-height:20px;text-align:justify;text-align-last:justify;color:#000;white-space:normal">suscipit sit mauris ipsum Praesent eget purus pretium Pellentesque et sed non ultricies facilisis sed at accumsan dolor</div>
<div class="a" style="left:95px;top:657.6px;width:539px;height:20px;overflow:hidden;font-family:Liberation Serif;font-weight:bold;font-size:17px;line-height:20px;text-align:justify;text-align-last:justify;color:#000;white-space:normal">dolor ac Lorem elit iaculis semper gravida quam netus Vestibulum in quis mi libero</div>
<div class="a" style="left:95px;top:696.4px;width:599px;height:20px;overflow:hidden;font-family:Liberation Serif;font-weight:bold;font-size:17px;line-height:20px;text-align:justify;text-align-last:justify;color:#000;white-space:normal">tellus Nulla eleifend ut Donec ultrices adipiscing Duis vestibulum odio facilisis et egestas posuere turpis sed maximus elementum</div>
<div class="a" style="left:95px;top:718.7px;width:599px;height:20px;overflow:hidden;font-family:Liberation Serif;font-weight:bold;font-size:17px;line-height:20px;text-align:justify;text-align-last:justify;color:#000;white-space:normal">metus quis blandit dui vitae consectetur justo Quisque magna convallis senectus turpis rhoncus a egestas Phasellus sapien condimentum</div>
<div class="a" style="left:95px;top:741.0px;width:599px;height:20px;overflow:hidden;font-family:Liberation Serif;font-weight:bold;font-size:17px;line-height:20px;text-align:justify;text-align-last:justify;color:#000;white-space:normal">pretium ex tempor dui amet sapien fermentum Proin amet tristique ac velit laoreet turpis est elit nunc metus</div>
<div class="a" style="left:95px;top:769.0px;width:599px;height:20px;overflow:hidden;font-family:Liberation Serif;font-weight:bold;font-size:17px;line-height:20px;text-align:justify;text-align-last:justify;color:#000;white-space:normal">lorem vulputate finibus sit amet non volutpat sit morbi fames ac Cras eros tempor ultrices ligula ut Cras</div>
<div class="a" style="left:95px;top:791.4px;width:599px;height:20px;overflow:hidden;font-family:Liberation Serif;font-weight:bold;font-size:17px;line-height:20px;text-align:justify;text-align-last:justify;color:#000;white-space:normal">amet mattis dolor sit justo sodales dolor habitant malesuada erat nunc Nam faucibus dignissim pretium nisl suscipit sit</div>
<div class="a" style="left:95px;top:813.7px;width:599px;height:20px;overflow:hidden;font-family:Liberation Serif;font-weight:bold;font-size:17px;line-height:20px;text-align:justify;text-align-last:justify;color:#000;white-space:normal">mauris ipsum Praesent eget purus pretium Pellentesque et sed non ultricies facilisis sed at accumsan dolor dolor ac</div>
<div class="a" style="left:95px;top:836.0px;width:599px;height:20px;overflow:hidden;font-family:Liberation Serif;font-weight:bold;font-size:17px;line-height:20px;text-align:justify;text-align-last:justify;color:#000;white-space:normal">Lorem elit iaculis semper gravida quam netus Vestibulum in quis mi libero tellus Nulla eleifend ut Donec ultrices</div>
<div class="a" style="left:95px;top:858.3px;width:599px;height:20px;overflow:hidden;font-family:Liberation Serif;font-weight:bold;font-size:17px;line-height:20px;text-align:justify;text-align-last:justify;color:#000;white-space:normal">adipiscing Duis vestibulum odio facilisis et egestas posuere turpis sed maximus elementum metus quis blandit dui vitae consectetur</div>
<div class="a" style="left:95px;top:880.7px;width:329px;height:20px;overflow:hidden;font-family:Liberation Serif;font-weight:bold;font-size:17px;line-height:20px;text-align:justify;text-align-last:justify;color:#000;white-space:normal">justo Quisque magna convallis senectus turpis rhoncus a egestas Phasellus sapien condimentum pretium ex</div>
<div class="a" style="left:95px;top:918.1px;width:599px;height:20px;overflow:hidden;font-family:Liberation Serif;font-weight:bold;font-size:17px;line-height:20px;text-align:justify;text-align-last:justify;color:#000;white-space:normal">tempor dui amet sapien fermentum Proin amet tristique ac velit laoreet turpis est elit nunc metus lorem vulputate</div>
<div class="a" style="left:95px;top:940.4px;width:599px;height:20px;overflow:hidden;font-family:Liberation Serif;font-weight:bold;font-size:17px;line-height:20px;text-align:justify;text-align-last:justify;color:#000;white-space:normal">finibus sit amet non volutpat sit morbi fames ac Cras eros tempor ultrices ligula ut Cras amet mattis</div>
<div class="a" style="left:95px;top:966.6px;width:599px;height:20px;overflow:hidden;font-family:Liberation Serif;font-weight:bold;font-size:17px;line-height:20px;text-align:justify;text-align-last:justify;color:#000;white-space:normal">dolor sit justo sodales dolor habitant malesuada erat nunc Nam faucibus dignissim pretium nisl suscipit sit mauris ipsum</div>
<div class="a" style="left:95px;top:988.9px;width:599px;height:20px;overflow:hidden;font-family:Liberation Serif;font-weight:bold;font-size:17px;line-height:20px;text-align:justify;text-align-last:justify;color:#000;white-space:normal">Praesent eget purus pretium Pellentesque et sed non ultricies facilisis sed at accumsan dolor dolor ac Lorem elit</div>
</div></div>
<div class="a" style="left:200px;top:819px;width:108px;height:152px;overflow:hidden;opacity:0.52;background:#fff">
<div class="a" style="left:0;top:0;width:793px;height:1117px;transform:scale(0.13619);transform-origin:0 0">

<div class="a" style="left:95px;top:98.7px;width:599px;height:20px;overflow:hidden;font-family:Liberation Serif;font-weight:bold;font-size:17px;line-height:20px;text-align:justify;text-align-last:justify;color:#000;white-space:normal">iaculis semper gravida quam netus Vestibulum in quis mi libero tellus Nulla eleifend ut Donec ultrices adipiscing Duis</div>
<div class="a" style="left:95px;top:121.0px;width:599px;height:20px;overflow:hidden;font-family:Liberation Serif;font-weight:bold;font-size:17px;line-height:20px;text-align:justify;text-align-last:justify;color:#000;white-space:normal">vestibulum odio facilisis et egestas posuere turpis sed maximus elementum metus quis blandit dui vitae consectetur justo Quisque</div>
<div class="a" style="left:95px;top:143.3px;width:599px;height:20px;overflow:hidden;font-family:Liberation Serif;font-weight:bold;font-size:17px;line-height:20px;text-align:justify;text-align-last:justify;color:#000;white-space:normal">magna convallis senectus turpis rhoncus a egestas Phasellus sapien condimentum pretium ex tempor dui amet sapien fermentum Proin</div>
<div class="a" style="left:95px;top:165.6px;width:599px;height:20px;overflow:hidden;font-family:Liberation Serif;font-weight:bold;font-size:17px;line-height:20px;text-align:justify;text-align-last:justify;color:#000;white-space:normal">amet tristique ac velit laoreet turpis est elit nunc metus lorem vulputate finibus sit amet non volutpat sit</div>
<div class="a" style="left:95px;top:188.0px;width:599px;height:20px;overflow:hidden;font-family:Liberation Serif;font-weight:bold;font-size:17px;line-height:20px;text-align:justify;text-align-last:justify;color:#000;white-space:normal">morbi fames ac Cras eros tempor ultrices ligula ut Cras amet mattis dolor sit justo sodales dolor habitant</div>
<div class="a" style="left:95px;top:217.6px;width:419px;height:20px;overflow:hidden;font-family:Liberation Serif;font-weight:bold;font-size:17px;line-height:20px;text-align:justify;text-align-last:justify;color:#000;white-space:normal">malesuada erat nunc Nam faucibus dignissim pretium nisl suscipit sit mauris ipsum Praesent eget</div>
<div class="a" style="left:95px;top:253.6px;width:599px;height:20px;overflow:hidden;font-family:Liberation Serif;font-weight:bold;font-size:17px;line-height:20px;text-align:justify;text-align-last:justify;color:#000;white-space:normal">purus pretium Pellentesque et sed non ultricies facilisis sed at accumsan dolor dolor ac Lorem elit iaculis semper</div>
<div class="a" style="left:95px;top:275.9px;width:599px;height:20px;overflow:hidden;font-family:Liberation Serif;font-weight:bold;font-size:17px;line-height:20px;text-align:justify;text-align-last:justify;color:#000;white-space:normal">gravida quam netus Vestibulum in quis mi libero tellus Nulla eleifend ut Donec ultrices adipiscing Duis vestibulum odio</div>
<div class="a" style="left:95px;top:298.2px;width:599px;height:20px;overflow:hidden;font-family:Liberation Serif;font-weight:bold;font-size:17px;line-height:20px;text-align:justify;text-align-last:justify;color:#000;white-space:normal">facilisis et egestas posuere turpis sed maximus elementum metus quis blandit dui vitae consectetur justo Quisque magna convallis</div>
<div class="a" style="left:95px;top:320.6px;width:599px;height:20px;overflow:hidden;font-family:Liberation Serif;font-weight:bold;font-size:17px;line-height:20px;text-align:justify;text-align-last:justify;color:#000;white-space:normal">senectus turpis rhoncus a egestas Phasellus sapien condimentum pretium ex tempor dui amet sapien fermentum Proin amet tristique</div>
<div class="a" style="left:95px;top:342.9px;width:599px;height:20px;overflow:hidden;font-family:Liberation Serif;font-weight:bold;font-size:17px;line-height:20px;text-align:justify;text-align-last:justify;color:#000;white-space:normal">ac velit laoreet turpis est elit nunc metus lorem vulputate finibus sit amet non volutpat sit morbi fames</div>
<div class="a" style="left:95px;top:365.2px;width:599px;height:20px;overflow:hidden;font-family:Liberation Serif;font-weight:bold;font-size:17px;line-height:20px;text-align:justify;text-align-last:justify;color:#000;white-space:normal">ac Cras eros tempor ultrices ligula ut Cras amet mattis dolor sit justo sodales dolor habitant malesuada erat</div>
<div class="a" style="left:95px;top:393.1px;width:599px;height:20px;overflow:hidden;font-family:Liberation Serif;font-weight:bold;font-size:17px;line-height:20px;text-align:justify;text-align-last:justify;color:#000;white-space:normal">nunc Nam faucibus dignissim pretium nisl suscipit sit mauris ipsum Praesent eget purus pretium Pellentesque et sed non</div>
<div class="a" style="left:95px;top:415.4px;width:599px;height:20px;overflow:hidden;font-family:Liberation Serif;font-weight:bold;font-size:17px;line-height:20px;text-align:justify;text-align-last:justify;color:#000;white-space:normal">ultricies facilisis sed at accumsan dolor dolor ac Lorem elit iaculis semper gravida quam netus Vestibulum in quis</div>
<div class="a" style="left:95px;top:437.8px;width:599px;height:20px;overflow:hidden;font-family:Liberation Serif;font-weight:bold;font-size:17px;line-height:20px;text-align:justify;text-align-last:justify;color:#000;white-space:normal">mi libero tellus Nulla eleifend ut Donec ultrices adipiscing Duis vestibulum odio facilisis et egestas posuere turpis sed</div>
<div class="a" style="left:95px;top:460.1px;width:479px;height:20px;overflow:hidden;font-family:Liberation Serif;font-weight:bold;font-size:17px;line-height:20px;text-align:justify;text-align-last:justify;color:#000;white-space:normal">maximus elementum metus quis blandit dui vitae consectetur justo Quisque magna convallis senectus turpis</div>
<div class="a" style="left:95px;top:496.6px;width:599px;height:20px;overflow:hidden;font-family:Liberation Serif;font-weight:bold;font-size:17px;line-height:20px;text-align:justify;text-align-last:justify;color:#000;white-space:normal">rhoncus a egestas Phasellus sapien condimentum pretium ex tempor dui amet sapien fermentum Proin amet tristique ac velit</div>
<div class="a" style="left:95px;top:519.0px;width:599px;height:20px;overflow:hidden;font-family:Liberation Serif;font-weight:bold;font-size:17px;line-height:20px;text-align:justify;text-align-last:justify;color:#000;white-space:normal">laoreet turpis est elit nunc metus lorem vulputate finibus sit amet non volutpat sit morbi fames ac Cras</div>
<div class="a" style="left:95px;top:541.3px;width:599px;height:20px;overflow:hidden;font-family:Liberation Serif;font-weight:bold;font-size:17px;line-height:20px;text-align:justify;text-align-last:justify;color:#000;white-space:normal">eros tempor ultrices ligula ut Cras amet mattis dolor sit justo sodales dolor habitant malesuada erat nunc Nam</div>
<div class="a" style="left:95px;top:563.6px;width:599px;height:20px;overflow:hidden;font-family:Liberation Serif;font-weight:bold;font-size:17px;line-height:20px;text-align:justify;text-align-last:justify;color:#000;white-space:normal">faucibus dignissim pretium nisl suscipit sit mauris ipsum Praesent eget purus pretium Pellentesque et sed non ultricies facilisis</div>
</div></div>
</div>
<div class="t" style="left:250px;top:380px;font-size:13px;font-weight:normal;font-style:normal;color:#fff;">1</div>
<div class="t" style="left:249.5px;top:581px;font-size:13px;font-weight:normal;font-style:normal;color:#fff;">2</div>
<div class="t" style="left:249.5px;top:782px;font-size:13px;font-weight:normal;font-style:normal;color:#fff;">3</div>
<div class="t" style="left:752.5px;top:292px;font-size:49px;font-weight:bold;font-style:normal;color:#2156c2;transform:scaleX(0.8935);">Lorem ipsum dolor sit amet</div>
<div class="t" style="left:753px;top:412px;font-size:17px;font-weight:normal;font-style:normal;color:#000;transform:scaleX(0.9444);-webkit-text-stroke:0.25px #000">Lorem ipsum dolor sit amet, consectetur adipiscing elit. Praesent sit amet sapien</div>
<div class="t" style="left:753px;top:435px;font-size:17px;font-weight:normal;font-style:normal;color:#000;transform:scaleX(0.9409);-webkit-text-stroke:0.25px #000">justo. Duis iaculis eget justo non fermentum. Quisque vestibulum semper purus</div>
<div class="t" style="left:753px;top:458px;font-size:17px;font-weight:normal;font-style:normal;color:#000;transform:scaleX(0.9438);-webkit-text-stroke:0.25px #000">sodales volutpat. Proin magna odio, gravida pretium dolor sit amet, convallis facilisis</div>
<div class="t" style="left:753px;top:481px;font-size:17px;font-weight:normal;font-style:normal;color:#000;transform:scaleX(0.9426);-webkit-text-stroke:0.25px #000">quam. Pellentesque habitant morbi tristique senectus et netus et malesuada fames</div>
<div class="t" style="left:753px;top:504px;font-size:17px;font-weight:normal;font-style:normal;color:#000;transform:scaleX(0.9345);-webkit-text-stroke:0.25px #000">ac turpis egestas. Vestibulum sed erat ac velit rhoncus posuere in non nunc. Cras</div>
<div class="t" style="left:753px;top:527px;font-size:17px;font-weight:normal;font-style:normal;color:#000;transform:scaleX(0.9446);-webkit-text-stroke:0.25px #000">laoreet a turpis quis ultricies.</div>
<div class="t" style="left:753.4px;top:564px;font-size:34px;font-weight:bold;font-style:normal;color:#000;transform:scaleX(0.8831);">Vivamus ut ante dolor</div>
<div class="t" style="left:757.8px;top:627px;font-size:17px;font-weight:normal;font-style:normal;color:#000;transform:scaleX(0.9402);-webkit-text-stroke:0.25px #000">Nam eros turpis, egestas sed mi facilisis, faucibus tempor est. Phasellus maximus,</div>
<div class="t" style="left:753px;top:650px;font-size:17px;font-weight:normal;font-style:normal;color:#000;transform:scaleX(0.9431);-webkit-text-stroke:0.25px #000">libero sed dignissim ultrices, elit sapien elementum tellus, at pretium ligula nunc</div>
<div class="t" style="left:753px;top:673px;font-size:17px;font-weight:normal;font-style:normal;color:#000;transform:scaleX(0.9467);-webkit-text-stroke:0.25px #000">condimentum metus. Nulla accumsan nisl ut metus pretium, quis eleifend dolor</div>
<div class="t" style="left:753px;top:696px;font-size:17px;font-weight:normal;font-style:normal;color:#000;transform:scaleX(0.9372);-webkit-text-stroke:0.25px #000">suscipit. Cras lorem ex, blandit ut dolor sit amet, vulputate tempor dui. Donec ac</div>
<div class="t" style="left:753px;top:719px;font-size:17px;font-weight:normal;font-style:normal;color:#000;transform:scaleX(0.9430);-webkit-text-stroke:0.25px #000">mauris mattis, finibus dui vitae, ultrices justo. Nunc fringilla purus urna, et cursus mi</div>
<div class="t" style="left:753px;top:742px;font-size:17px;font-weight:normal;font-style:normal;color:#000;transform:scaleX(0.9374);-webkit-text-stroke:0.25px #000">varius iaculis. Nunc rhoncus et enim nec convallis. Vivamus sed elit pulvinar, pretium</div>
<div class="t" style="left:753px;top:765px;font-size:17px;font-weight:normal;font-style:normal;color:#000;transform:scaleX(0.9357);-webkit-text-stroke:0.25px #000">dui non, consequat arcu. Fusce et dignissim nunc, non mattis nunc. Sed fermentum</div>
<div class="t" style="left:753px;top:788px;font-size:17px;font-weight:normal;font-style:normal;color:#000;transform:scaleX(0.9354);-webkit-text-stroke:0.25px #000">erat ut leo hendrerit imperdiet. Vivamus rhoncus tellus et urna congue, a cursus</div>
<div class="t" style="left:753px;top:811px;font-size:17px;font-weight:normal;font-style:normal;color:#000;transform:scaleX(0.9422);-webkit-text-stroke:0.25px #000">lectus euismod. Proin varius lectus sit amet sapien fermentum posuere. Ut ac</div>
<div class="t" style="left:753px;top:834px;font-size:17px;font-weight:normal;font-style:normal;color:#000;transform:scaleX(0.9273);-webkit-text-stroke:0.25px #000">semper justo. Phasellus vitae augue dolor. Sed nisl arcu, vehicula vel scelerisque id,</div>
<div class="t" style="left:753px;top:857px;font-size:17px;font-weight:normal;font-style:normal;color:#000;transform:scaleX(0.9440);-webkit-text-stroke:0.25px #000">ullamcorper id nisl.</div>
<div class="a" style="left:112px;top:136px;width:1601px;height:56px;background:#323639;box-shadow:0 1px 5px rgba(0,0,0,.45);z-index:3"></div>
<div class="a" style="left:112px;top:136px;width:1601px;height:56px;z-index:4">
<div class="a" style="left:24px;top:22px;width:16px;height:2px;background:#fff"></div>
<div class="a" style="left:24px;top:27px;width:16px;height:2px;background:#fff"></div>
<div class="a" style="left:24px;top:32px;width:16px;height:2px;background:#fff"></div>
<div class="a" style="left:664px;top:18px;width:23px;height:20px;background:#191b1c"></div>
<div class="a" style="left:734.5px;top:21px;width:1px;height:15px;background:#7b7e80"></div>
<div class="a" style="left:750px;top:27px;width:12px;height:2px;background:#fff"></div>
<div class="a" style="left:776px;top:18px;width:44px;height:20px;background:#191b1c"></div>
<div class="a" style="left:834px;top:27px;width:12px;height:2px;background:#fff"></div>
<div class="a" style="left:839px;top:22px;width:2px;height:12px;background:#fff"></div>
<div class="a" style="left:859.5px;top:21px;width:1px;height:15px;background:#7b7e80"></div>
</div>
<div class="t" style="left:176px;top:156px;font-size:15px;font-weight:bold;font-style:normal;color:#fff;transform:scaleX(0.8978);z-index:5">82_Werplaats/2024/01/06/1942711_725825/Ib2TKg0w2kT7TE4tUE2x/Document 1.pdf</div>
<div class="t" style="left:784.5px;top:157.3px;font-size:13px;font-weight:normal;font-style:normal;color:#fff;z-index:5">1</div>
<div class="t" style="left:802.5px;top:157.3px;font-size:13px;font-weight:normal;font-style:normal;color:#fff;transform:scaleX(1.1342);z-index:5">/ 11</div>
<div class="t" style="left:894.5px;top:157px;font-size:13px;font-weight:normal;font-style:normal;color:#fff;transform:scaleX(0.9474);z-index:5">100%</div>
<svg style="left:990px;top:154px;z-index:5" width="22" height="20" viewBox="0 0 22 20"><rect x="2.9" y="3.4" width="16" height="13" rx="1.5" fill="none" stroke="#f1f1f1" stroke-width="2"/><path d="M8.5 8.4 L11 4.9 L13.5 8.4Z M8.5 11.6 L11 15.1 L13.5 11.6Z" fill="#f1f1f1"/></svg>
<svg style="left:1020px;top:152px;z-index:5" width="24" height="24" viewBox="0 0 24 24"><path d="M9.2 8.2 L13.6 12.6 L9.2 17 L4.8 12.6Z" fill="none" stroke="#f1f1f1" stroke-width="2"/><path d="M14.1 6.3 A6.3 6.3 0 1 1 11.95 18.52" fill="none" stroke="#f1f1f1" stroke-width="2"/><path d="M13.7 2.8 L10.6 6.3 L14.2 9.6Z" fill="#f1f1f1"/></svg>
<svg style="left:1599px;top:153.5px;z-index:5" width="21.1" height="21.1" viewBox="0 0 24 24"><path d="M19 9h-4V3H9v6H5l7 7 7-7zM5 18v2h14v-2H5z" fill="#f1f1f1"/></svg>
<svg style="left:1630px;top:150px;z-index:5" width="30" height="30" viewBox="1630 150 30 30"><rect x="1640" y="156" width="10" height="4" fill="#f1f1f1"/><path d="M1638.2 161h13.6a1.5 1.5 0 0 1 1.5 1.5v5.7h-16.6v-5.7a1.5 1.5 0 0 1 1.5-1.5z" fill="#f1f1f1"/><path d="M1640 165h10v6.6h-10z" fill="#f1f1f1"/><rect x="1642.1" y="166.1" width="5.8" height="3.5" fill="#323639"/><circle cx="1650.7" cy="163.1" r="0.9" fill="#323639"/></svg>
<svg style="left:1670px;top:150px;z-index:5" width="24" height="30" viewBox="1670 150 24 30"><circle cx="1681" cy="158.8" r="1.9" fill="#f1f1f1"/><circle cx="1681" cy="164" r="1.9" fill="#f1f1f1"/><circle cx="1681" cy="169.2" r="1.9" fill="#f1f1f1"/></svg>
<svg style="left:0;top:0" width="1825" height="959" viewBox="0 0 1825 959"><path d="M44.2 465.7 L29 480 L44.2 494.1" fill="none" stroke="#d4d4d4" stroke-width="6" stroke-linecap="round" stroke-linejoin="round"/><path d="M1781.2 466.2 L1796.2 480.5 L1781.2 493.8" fill="none" stroke="#d4d4d4" stroke-width="6" stroke-linecap="round" stroke-linejoin="round"/></svg>
</body></html>
